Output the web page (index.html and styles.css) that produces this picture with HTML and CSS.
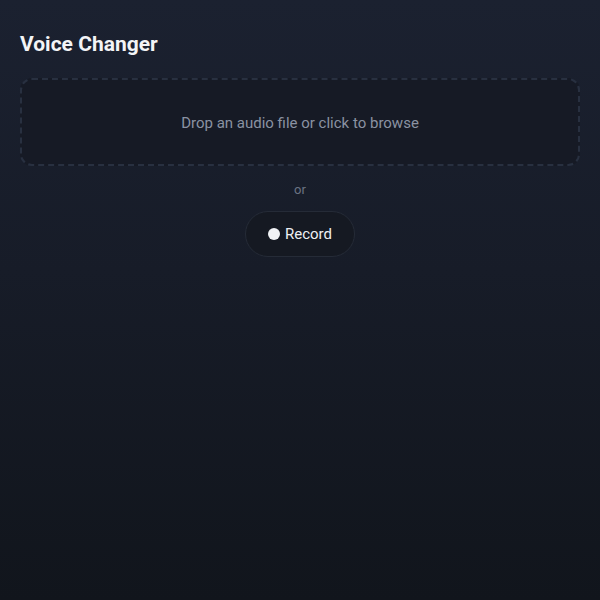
FILE: index.html
```html
<!DOCTYPE html>
<html>
<head>
<meta charset="utf-8">
<link rel="stylesheet" href="styles.css">
</head>
<body>
<main class="app">
  <h1 class="title">Voice Changer</h1>
  <div class="dropzone">Drop an audio file or click to browse</div>
  <div class="or">or</div>
  <button class="record"><span class="dot"></span><span>Record</span></button>
</main>
</body>
</html>
```
FILE: styles.css
```css
html, body {
  margin: 0;
  height: 100%;
}
body {
  background: linear-gradient(180deg, #1b2130 0%, #171c28 45%, #11151c 100%);
  font-family: Roboto, "Noto Sans", sans-serif;
  color: #e5e7eb;
}
.app {
  padding: 32px 20px;
  display: flex;
  flex-direction: column;
  align-items: center;
}
.title {
  align-self: stretch;
  margin: 0 0 22px 0;
  font-size: 21px;
  font-weight: 700;
  line-height: 24px;
  color: #f3f4f6;
}
.dropzone {
  align-self: stretch;
  box-sizing: border-box;
  height: 88px;
  padding-top: 1px;
  border: 2px dashed #283040;
  border-radius: 12px;
  background: #161a25;
  display: flex;
  align-items: center;
  justify-content: center;
  font-size: 15px;
  color: #8a92a2;
}
.or {
  margin-top: 16px;
  font-size: 13px;
  line-height: 15px;
  color: #6b7383;
}
.record {
  margin-top: 14px;
  box-sizing: border-box;
  height: 46px;
  padding: 0 22px 1px 22px;
  border: 1px solid #252b37;
  border-radius: 23px;
  background: #151922;
  display: flex;
  align-items: center;
  gap: 5px;
  font-family: Roboto, "Noto Sans", sans-serif;
  font-size: 15px;
  color: #eef0f3;
}
.dot {
  width: 12px;
  height: 12px;
  border-radius: 50%;
  background: #f1f3f6;
}
```
